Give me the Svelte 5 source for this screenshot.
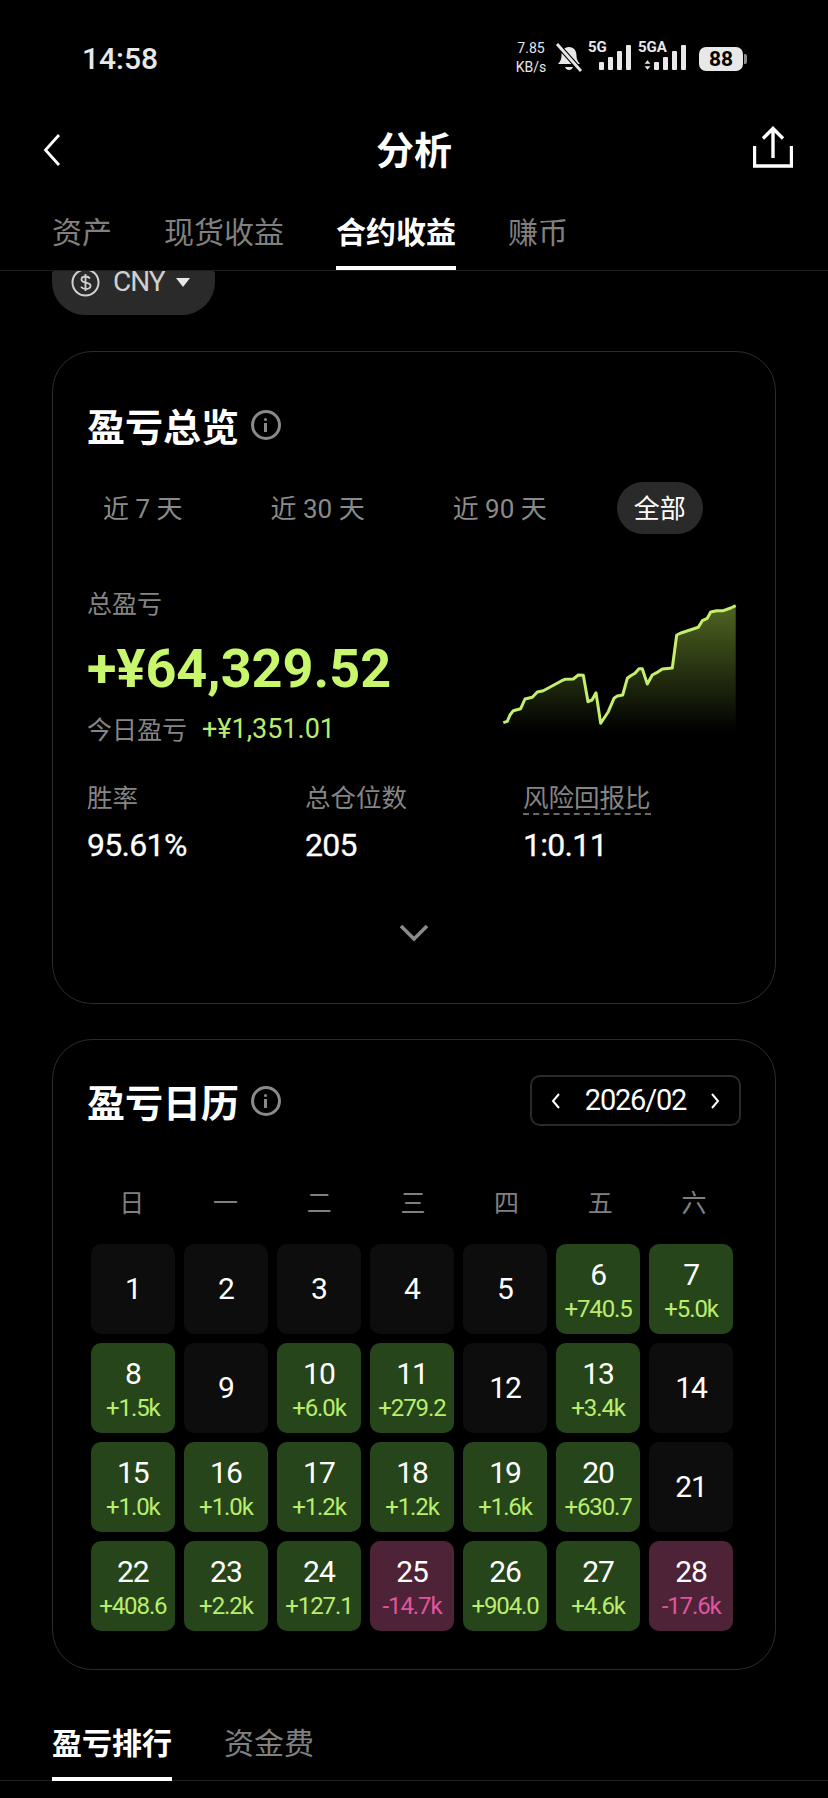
<script>
  const periods = [
    { label: '近 7 天' },
    { label: '近 30 天' },
    { label: '近 90 天' },
    { label: '全部', active: true }
  ];
  const topTabs = [
    { label: '资产' },
    { label: '现货收益' },
    { label: '合约收益', active: true },
    { label: '赚币' }
  ];
  const weekdays = ['日', '一', '二', '三', '四', '五', '六'];
  const days = [
    ['1'], ['2'], ['3'], ['4'], ['5'], ['6', '+740.5'], ['7', '+5.0k'],
    ['8', '+1.5k'], ['9'], ['10', '+6.0k'], ['11', '+279.2'], ['12'], ['13', '+3.4k'], ['14'],
    ['15', '+1.0k'], ['16', '+1.0k'], ['17', '+1.2k'], ['18', '+1.2k'], ['19', '+1.6k'], ['20', '+630.7'], ['21'],
    ['22', '+408.6'], ['23', '+2.2k'], ['24', '+127.1'], ['25', '-14.7k'], ['26', '+904.0'], ['27', '+4.6k'], ['28', '-17.6k']
  ];
  const raw = [
    [40,398],[52,394],[60,375],[70,362],[92,356],[105,327],[127,322],[142,306],[160,302],[215,272],[225,268],[250,267],
    [265,255],[280,256],[294,335],[306,330],[318,308],[332,400],[355,365],[372,325],[382,318],[398,315],[412,265],[422,257],
    [435,250],[447,236],[457,236],[472,282],[487,255],[500,248],[517,237],[547,234],[560,135],[575,128],[625,112],[637,92],
    [652,85],[662,66],[680,62],[700,62],[722,54],[737,47]
  ];
  const line = raw.map(([x, y]) => `${(x / 3).toFixed(1)},${(y / 3).toFixed(1)}`).join(' ');
  const area = `${line} 245.7,142 13.3,142`;
  const cellClass = (d) => (d[1] ? (d[1][0] === '-' ? 'cell loss' : 'cell gain') : 'cell');
  const bars = [8, 13, 19, 25];
</script>

<div class="page">
  <div class="status">
    <span class="time">14:58</span>
    <div class="sys">
      <div class="speed"><span>7.85</span><span>KB/s</span></div>
      <svg class="bell" viewBox="0 0 28 30" width="28" height="30">
        <path d="M14 4c-5 0-7.500 4-7.500 8.500 0 3.500-1 5.500-3.500 8.500h22c-2.500-3-3.500-5-3.500-8.500C21.500 8 19 4 14 4z" fill="#e8e8e8"/>
        <path d="M10 24h8c-.6 2-2.200 3-4 3s-3.400-1-4-3z" fill="#e8e8e8"/>
        <path d="M2 1l24 27" stroke="#000" stroke-width="5"/>
        <path d="M2 1l24 27" stroke="#e8e8e8" stroke-width="2.800"/>
      </svg>
      <div class="net one">
        <span class="net-label">5G</span>
        <div class="bars">
          {#each bars as h}<i style="height:{h}px"></i>{/each}
        </div>
      </div>
      <div class="net two">
        <span class="net-label">5GA</span>
        <svg class="arrows" viewBox="0 0 6 8" width="7" height="10"><path d="M3 0l2.500 3h-5zM3 8L.5 5h5z" fill="#e8e8e8"/></svg>
        <div class="bars">
          {#each bars as h}<i style="height:{h}px"></i>{/each}
        </div>
      </div>
      <div class="battery"><span>88</span></div>
    </div>
  </div>

  <header class="nav">
    <svg class="back" viewBox="0 0 18 34" width="18" height="34"><path d="M16 2L2.500 17 16 32" fill="none" stroke="#fff" stroke-width="2.800"/></svg>
    <h1>分析</h1>
    <svg class="share" viewBox="0 0 40 42" width="40" height="42">
      <path d="M1.500 20v20h37V20M20 32V3M10 12.500L20 2.500l10 10" fill="none" stroke="#fff" stroke-width="3.400"/>
    </svg>
  </header>

  <nav class="tabs top">
    {#each topTabs as t}
      <span class="tab" class:active={t.active}>{t.label}</span>
    {/each}
  </nav>

  <div class="pill-row">
    <div class="pill">
      <svg class="coin" viewBox="0 0 30 27" width="30" height="27">
        <circle cx="14.500" cy="11.500" r="13" fill="none" stroke="#d0d0d0" stroke-width="2"/>
        <path d="M19 7.500c-1-1.500-2.500-2-4.500-2-2.500 0-4 1.300-4 3 0 4.500 9 2 9 6.300 0 1.900-1.800 3.200-4.500 3.200-2.200 0-3.900-.8-5-2.300M14.500 3v17" fill="none" stroke="#d0d0d0" stroke-width="1.800"/>
      </svg>
      <span class="cny">CNY</span>
      <i class="caret"></i>
    </div>
  </div>

  <section class="card overview">
    <div class="title"><h2>盈亏总览</h2><span class="info"><i></i></span></div>
    <div class="periods">
      {#each periods as p}
        <span class="period" class:active={p.active}>{p.label}</span>
      {/each}
    </div>
    <div class="summary">
      <div>
        <div class="muted label">总盈亏</div>
        <div class="amount">+¥64,329.52</div>
        <div class="today"><span class="muted">今日盈亏</span><span class="gain-text">+¥1,351.01</span></div>
      </div>
      <svg class="spark" viewBox="0 0 250 150" width="250" height="150">
        <defs>
          <linearGradient id="fade" gradientUnits="userSpaceOnUse" x1="0" y1="15" x2="0" y2="142">
            <stop offset="0" stop-color="#4f6622"/>
            <stop offset="1" stop-color="#000"/>
          </linearGradient>
        </defs>
        <polygon points={area} fill="url(#fade)"/>
        <polyline points={line} fill="none" stroke="#c4ee6c" stroke-width="3" stroke-linejoin="round"/>
      </svg>
    </div>
    <div class="stats">
      <div class="stat"><div class="muted label">胜率</div><div class="value">95.61%</div></div>
      <div class="stat"><div class="muted label">总仓位数</div><div class="value">205</div></div>
      <div class="stat"><div class="muted label"><span class="dashed">风险回报比</span></div><div class="value">1:0.11</div></div>
    </div>
    <div class="expand">
      <svg viewBox="0 0 30 18" width="30" height="18"><path d="M2 2l13 13L28 2" fill="none" stroke="#8a8a8a" stroke-width="3.600"/></svg>
    </div>
  </section>

  <section class="card calendar">
    <div class="cal-head">
      <div class="title"><h2>盈亏日历</h2><span class="info"><i></i></span></div>
      <div class="month">
        <svg viewBox="0 0 10 18" width="10" height="18"><path d="M8 2L2 9l6 7" fill="none" stroke="#fff" stroke-width="2"/></svg>
        <span>2026/02</span>
        <svg viewBox="0 0 10 18" width="10" height="18"><path d="M2 2l6 7-6 7" fill="none" stroke="#fff" stroke-width="2"/></svg>
      </div>
    </div>
    <div class="weekdays">
      {#each weekdays as w}<span>{w}</span>{/each}
    </div>
    <div class="grid">
      {#each days as d}
        <div class={cellClass(d)}>
          <span class="num">{d[0]}</span>
          {#if d[1]}<span class="pnl">{d[1]}</span>{/if}
        </div>
      {/each}
    </div>
  </section>

  <nav class="tabs bottom">
    <span class="tab active">盈亏排行</span>
    <span class="tab">资金费</span>
  </nav>
</div>

<style>
  :global(body) {
    margin: 0;
    background: #000;
  }
  .page {
    width: 828px;
    height: 1798px;
    overflow: hidden;
    background: #000;
    color: #fff;
    font-family: Roboto, "Noto Sans CJK SC", sans-serif;
  }
  h1, h2 { margin: 0; font-family: "Noto Sans CJK SC", sans-serif; }

  .status {
    height: 116px;
    box-sizing: border-box;
    padding: 0 85px 0 82px;
    display: flex;
    align-items: center;
    justify-content: space-between;
    color: #e8e8e8;
  }
  .time { font: 500 30px Roboto, sans-serif; }
  .sys { display: flex; align-items: center; height: 30px; }
  .speed {
    display: flex;
    flex-direction: column;
    align-items: center;
    font: 400 14px/19px Roboto, sans-serif;
    width: 30px;
    margin-right: 9px;
  }
  .net { position: relative; display: flex; align-items: flex-end; height: 30px; box-sizing: border-box; padding-bottom: 3px; }
  .net.one { width: 44px; margin-left: 5px; padding-left: 11px; }
  .net.two { width: 49px; margin-left: 6px; padding-left: 6px; }
  .net-label { position: absolute; left: 0; top: -4px; font: 700 15px/16px Roboto, sans-serif; }
  .bars { display: flex; align-items: flex-end; gap: 4px; }
  .bars i { display: block; width: 5px; border-radius: 1px; background: #e8e8e8; }
  .arrows { margin-right: 3px; }
  .battery {
    position: relative;
    width: 44px;
    height: 24px;
    border-radius: 7px;
    background: #e8e8e8;
    color: #000;
    font: 700 21px/24px Roboto, sans-serif;
    text-align: center;
    margin-left: 12px;
    margin-top: 2px;
  }
  .battery::after {
    content: "";
    position: absolute;
    right: -4px;
    top: 7px;
    width: 3px;
    height: 10px;
    border-radius: 0 2px 2px 0;
    background: #8c8c8c;
  }

  .nav {
    height: 68px;
    box-sizing: border-box;
    padding: 0 39px;
    display: grid;
    grid-template-columns: 1fr auto 1fr;
    align-items: center;
  }
  .nav .back { margin-left: 4px; }
  .nav .share { justify-self: end; margin: 0 -4px 6px 0; }
  .nav h1 { font-size: 38px; font-weight: 700; line-height: 48px; margin-bottom: 4px; }

  .tabs { display: flex; border-bottom: 1px solid #1e1e1e; }
  .tabs.top { height: 87px; box-sizing: border-box; padding: 26px 0 0 52px; gap: 52px; }
  .tab {
    font: 400 30px/40px "Noto Sans CJK SC", sans-serif;
    color: #808080;
    height: 60px;
    box-sizing: border-box;
  }
  .tab.active {
    color: #fff;
    font-weight: 700;
    border-bottom: 4px solid #fff;
  }

  .pill-row { height: 80px; padding-left: 52px; }
  .pill {
    width: 163px;
    height: 44px;
    border-radius: 2px 2px 33px 33px;
    background: #2a2a2a;
    box-sizing: border-box;
    padding-left: 19px;
    display: flex;
    align-items: flex-start;
    color: #d0d0d0;
  }
  .cny { font: 400 28px/22px Roboto, sans-serif; letter-spacing: -1px; }
  .coin { margin-right: 12px; }
  .caret {
    margin: 7px 0 0 11px;
    border-left: 7px solid transparent;
    border-right: 7px solid transparent;
    border-top: 9px solid #e8e8e8;
  }

  .card {
    margin: 0 52px;
    box-sizing: border-box;
    border: 1px solid #2c2c2c;
    border-radius: 40px;
  }
  .overview { height: 653px; padding: 51px 35px 0 34px; margin-bottom: 35px; }
  .calendar { height: 631px; padding: 35px 34px 0; }

  .title { display: flex; align-items: center; gap: 12px; height: 44px; }
  .title h2 { font-size: 38px; line-height: 44px; font-weight: 700; }
  .info {
    position: relative;
    width: 24px;
    height: 24px;
    border: 3px solid #8a8a8a;
    border-radius: 50%;
  }
  .info::before {
    content: "";
    position: absolute;
    left: 10px;
    top: 5px;
    width: 3px;
    height: 3px;
    background: #8a8a8a;
    border-radius: 50%;
  }
  .info i {
    position: absolute;
    left: 10px;
    top: 10px;
    width: 3px;
    height: 9px;
    background: #8a8a8a;
  }

  .periods { display: flex; gap: 52px; margin: 35px 0 0 -2px; height: 52px; }
  .period {
    padding: 0 18px;
    border-radius: 26px;
    font: 400 26px/54px Roboto, "Noto Sans CJK SC", sans-serif;
    color: #8a8a8a;
    height: 52px;
  }
  .period.active { background: #2a2a2a; color: #fff; padding: 0 17px; }

  .summary { display: flex; justify-content: space-between; align-items: flex-start; margin-top: 51px; height: 161px; }
  .spark { margin-top: 5px; }
  .muted { color: #858585; }
  .label { font-size: 25px; line-height: 34px; font-family: "Noto Sans CJK SC", sans-serif; }
  .amount {
    margin-top: 20px;
    font: 700 54px/60px Roboto, sans-serif;
    color: #c8f66c;
  }
  .today {
    margin-top: 11px;
    display: flex;
    gap: 15px;
    font-size: 27px;
    line-height: 36px;
  }
  .today .muted { font: 400 25px/36px "Noto Sans CJK SC", sans-serif; }
  .gain-text { color: #b9ee6c; padding-top: 1px; }

  .stats { display: grid; grid-template-columns: 218px 218px 1fr; margin-top: 33px; }
  .stats .label { font-size: 25.500px; height: 36px; }
  .dashed { display: inline-block; border-bottom: 2px dashed #6a6a6a; height: 36px; box-sizing: border-box; }
  .value { margin-top: 10px; font: 400 32px/40px Roboto, sans-serif; letter-spacing: -.7px; -webkit-text-stroke: .3px #fff; }
  .expand { display: flex; justify-content: center; margin-top: 59px; }

  .cal-head { display: flex; justify-content: space-between; align-items: center; height: 51px; }
  .month {
    width: 211px;
    height: 51px;
    box-sizing: border-box;
    border: 2px solid #2a2a2a;
    border-radius: 10px;
    padding: 0 19px;
    display: flex;
    align-items: center;
    justify-content: space-between;
    font: 400 29px/51px Roboto, sans-serif;
    letter-spacing: -1.2px;
  }
  .weekdays {
    display: grid;
    grid-template-columns: repeat(7, 93.7px);
    margin: 57px 0 0 -2px;
    height: 36px;
    text-align: center;
    font: 400 25px/36px "Noto Sans CJK SC", sans-serif;
    color: #808080;
  }
  .grid {
    display: grid;
    grid-template-columns: repeat(7, 1fr);
    grid-auto-rows: 90px;
    gap: 9px 9.300px;
    width: 642px;
    margin: 25px 0 0 4px;
  }
  .cell {
    border-radius: 10px;
    background: #0d0d0d;
    display: flex;
    flex-direction: column;
    align-items: center;
    justify-content: center;
  }
  .cell.gain { background: #26451a; justify-content: flex-start; padding-top: 12px; box-sizing: border-box; }
  .cell.loss { background: #4e2337; justify-content: flex-start; padding-top: 12px; box-sizing: border-box; }
  .num { font: 400 30px/38px Roboto, sans-serif; letter-spacing: -1px; }
  .pnl { font: 400 24px/30px Roboto, sans-serif; letter-spacing: -1.100px; color: #b9ee6c; }
  .loss .pnl { color: #e0559f; }

  .tabs.bottom { margin-top: 51px; gap: 52px; padding-left: 52px; height: 60px; box-sizing: border-box; }
</style>
